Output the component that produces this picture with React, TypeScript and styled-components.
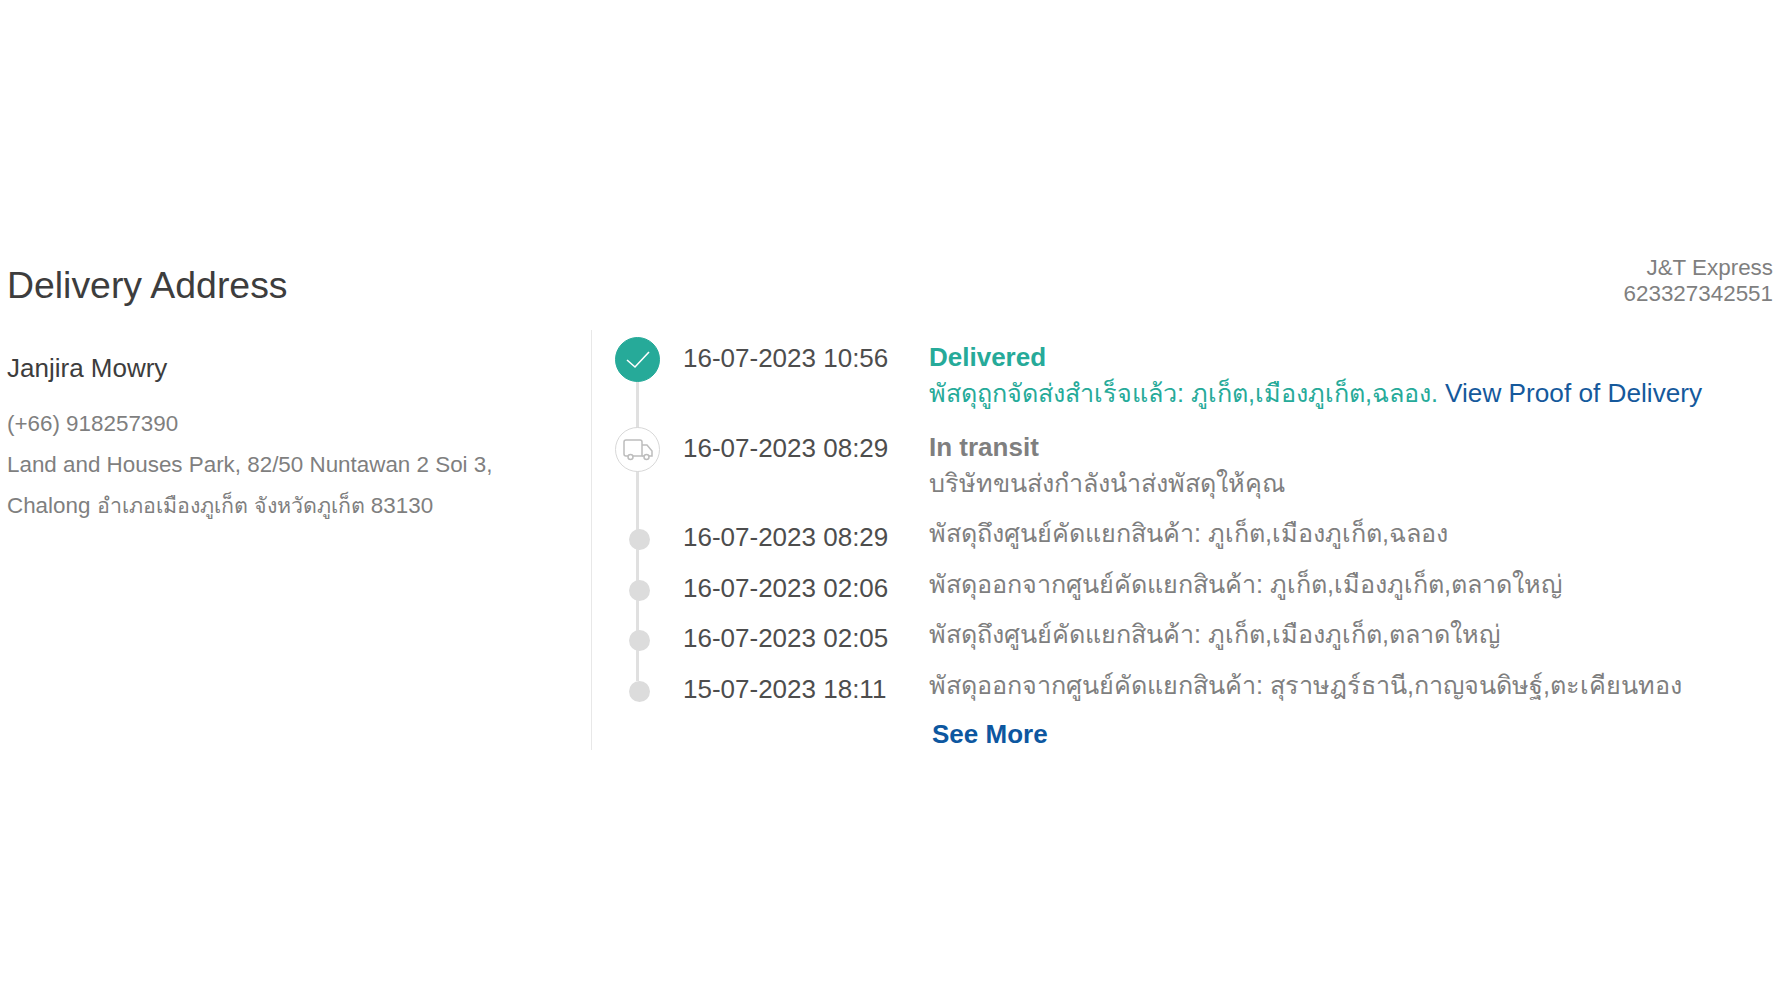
import styled, { createGlobalStyle } from "styled-components";

const Global = createGlobalStyle`
    html, body {
        margin: 0;
        background: #ffffff;
    }
    body {
        font-family: "Liberation Sans", "Noto Sans", "DejaVu Sans", sans-serif;
    }
`

const Page = styled.div`
    width: 1778px;
    height: 1000px;
    box-sizing: border-box;
    padding: 255px 5px 0 7px;
`

const Header = styled.div`
    display: flex;
    justify-content: space-between;
    height: 75px;
`

const Title = styled.h2`
    margin: 0;
    padding-top: 8px;
    font-size: 37.4px;
    line-height: 44px;
    font-weight: 400;
    color: #3d3d3d;
`

const Carrier = styled.div`
    text-align: right;
    font-size: 22.4px;
    line-height: 26px;
    color: #7f7f7f;
`

const Body = styled.div`
    display: flex;
`

const Address = styled.div`
    width: 584px;
    height: 420px;
    border-right: 1px solid #e8e8e8;
    flex: none;
`

const Name = styled.div`
    padding-top: 23px;
    font-size: 26px;
    line-height: 30px;
    color: #3d3d3d;
`

const Contact = styled.div`
    margin-top: 20px;
    font-size: 22.4px;
    line-height: 41px;
    color: #7f7f7f;
`

const ThaiPart = styled.span`
    font-size: 21.4px;
`

const Timeline = styled.div`
    display: flex;
    flex-direction: column;
    padding-top: 7px;
`

const Row = styled.div<{ $height: number; $last?: boolean }>`
    position: relative;
    display: flex;
    height: ${p => p.$height}px;

    &::before {
        content: "";
        display: ${p => (p.$last ? "none" : "block")};
        position: absolute;
        left: 44px;
        top: 12px;
        bottom: -12px;
        width: 3px;
        background: #e0e0e0;
    }
`

const Rail = styled.div`
    position: relative;
    width: 91px;
    flex: none;
    display: flex;
    justify-content: center;
`

const Badge = styled.div<{ $done?: boolean }>`
    width: 45px;
    height: 45px;
    box-sizing: border-box;
    border-radius: 50%;
    display: flex;
    align-items: center;
    justify-content: center;
    background: ${p => (p.$done ? "#26aa99" : "#ffffff")};
    border: 1px solid ${p => (p.$done ? "#26aa99" : "#d8d8d8")};
`

const Dot = styled.div`
    width: 21px;
    height: 21px;
    margin: 12px 0 0 3px;
    border-radius: 50%;
    background: #dcdcdc;
`

const Time = styled.div<{ $small?: boolean }>`
    width: 246px;
    flex: none;
    padding-top: ${p => (p.$small ? 4 : 5)}px;
    font-size: 26px;
    line-height: 32px;
    color: #4d4d4d;
`

const Info = styled.div`
    display: flex;
    flex-direction: column;
    gap: 5px;
    padding-top: 5px;
`

const Status = styled.div<{ $done?: boolean }>`
    font-size: 26px;
    line-height: 30px;
    font-weight: 700;
    color: ${p => (p.$done ? "#26aa99" : "#7f7f7f")};
`

const Detail = styled.div<{ $done?: boolean }>`
    font-size: 25.2px;
    line-height: 32px;
    white-space: nowrap;
    color: ${p => (p.$done ? "#26aa99" : "#7f7f7f")};
`

const Proof = styled.a`
    font-size: 26.2px;
    color: #15599c;
`

const SeeMore = styled.a`
    margin-left: 340px;
    font-size: 26px;
    line-height: 30px;
    font-weight: 700;
    color: #0d57a0;
`

const events = [
    { time: "16-07-2023 08:29", text: "พัสดุถึงศูนย์คัดแยกสินค้า: ภูเก็ต,เมืองภูเก็ต,ฉลอง" },
    { time: "16-07-2023 02:06", text: "พัสดุออกจากศูนย์คัดแยกสินค้า: ภูเก็ต,เมืองภูเก็ต,ตลาดใหญ่" },
    { time: "16-07-2023 02:05", text: "พัสดุถึงศูนย์คัดแยกสินค้า: ภูเก็ต,เมืองภูเก็ต,ตลาดใหญ่" },
    { time: "15-07-2023 18:11", text: "พัสดุออกจากศูนย์คัดแยกสินค้า: สุราษฎร์ธานี,กาญจนดิษฐ์,ตะเคียนทอง" },
]

const Check = () => (
    <svg width="26" height="20" viewBox="0 0 26 20" fill="none" stroke="#ffffff" strokeWidth="1.6">
        <path d="M2 10l8 7L24 2" />
    </svg>
)

const Truck = () => (
    <svg width="30" height="22" viewBox="0 0 30 22" fill="none" stroke="#bdbdbd" strokeWidth="1.5">
        <path d="M5 17H3a2 2 0 0 1-2-2V3a2 2 0 0 1 2-2h14a2 2 0 0 1 2 2v14H10" />
        <path d="M19 6h5l5 6v5h-3M21 17h-2" />
        <circle cx="7.5" cy="18" r="2.5" />
        <circle cx="23.5" cy="18" r="2.5" />
    </svg>
)

export default function App() {
    return (
        <Page>
            <Global />
            <Header>
                <Title>Delivery Address</Title>
                <Carrier>
                    J&amp;T Express
                    <br />
                    623327342551
                </Carrier>
            </Header>
            <Body>
                <Address>
                    <Name>Janjira Mowry</Name>
                    <Contact>
                        (+66) 918257390
                        <br />
                        Land and Houses Park, 82/50 Nuntawan 2 Soi 3,
                        <br />
                        Chalong <ThaiPart>อำเภอเมืองภูเก็ต จังหวัดภูเก็ต</ThaiPart> 83130
                    </Contact>
                </Address>
                <Timeline>
                    <Row $height={90}>
                        <Rail>
                            <Badge $done>
                                <Check />
                            </Badge>
                        </Rail>
                        <Time>16-07-2023 10:56</Time>
                        <Info>
                            <Status $done>Delivered</Status>
                            <Detail $done>
                                พัสดุถูกจัดส่งสำเร็จแล้ว: ภูเก็ต,เมืองภูเก็ต,ฉลอง. <Proof>View Proof of Delivery</Proof>
                            </Detail>
                        </Info>
                    </Row>
                    <Row $height={90}>
                        <Rail>
                            <Badge>
                                <Truck />
                            </Badge>
                        </Rail>
                        <Time>16-07-2023 08:29</Time>
                        <Info>
                            <Status>In transit</Status>
                            <Detail>บริษัทขนส่งกำลังนำส่งพัสดุให้คุณ</Detail>
                        </Info>
                    </Row>
                    {events.map((event, i) => (
                        <Row $height={50.5} $last={i === events.length - 1} key={event.time + event.text}>
                            <Rail>
                                <Dot />
                            </Rail>
                            <Time $small>{event.time}</Time>
                            <Detail>{event.text}</Detail>
                        </Row>
                    ))}
                    <SeeMore>See More</SeeMore>
                </Timeline>
            </Body>
        </Page>
    )
}
